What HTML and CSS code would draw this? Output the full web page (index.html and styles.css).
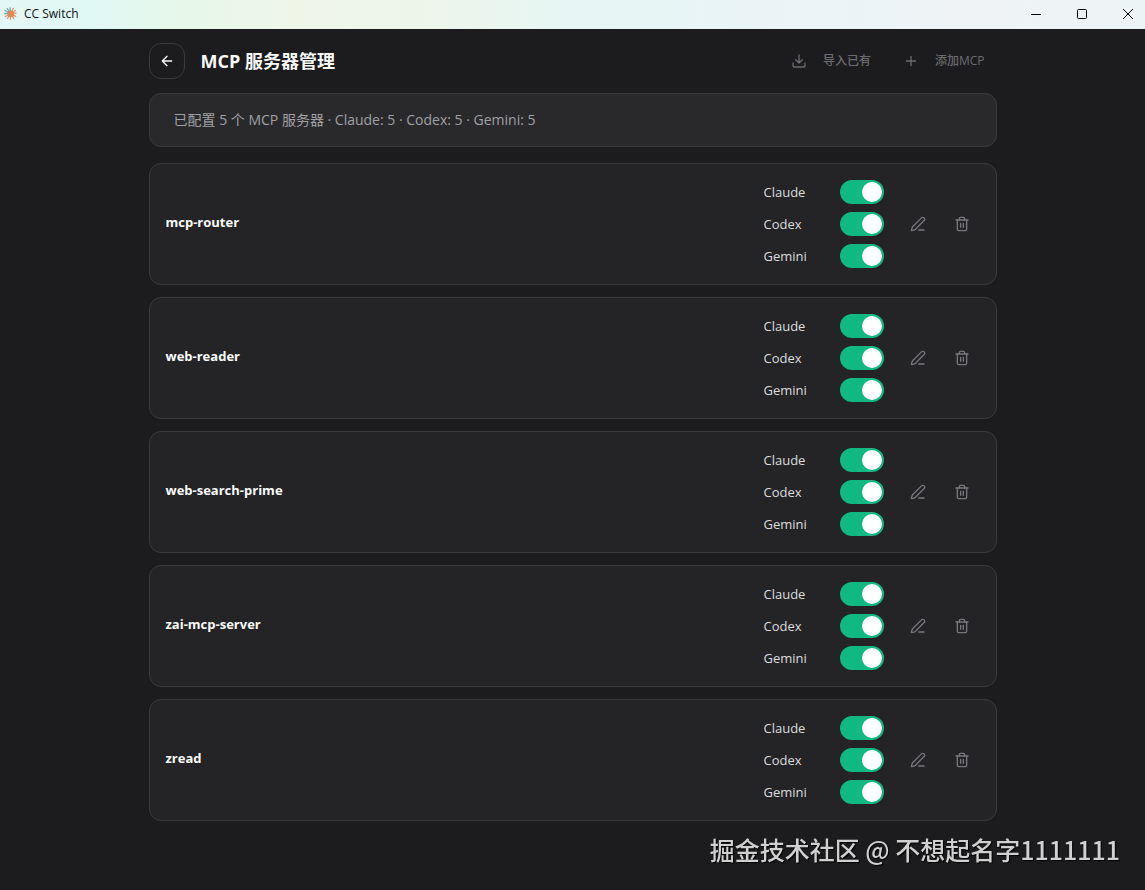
FILE: index.html
```html
<!DOCTYPE html>
<html lang="zh-CN">
<head>
  <meta charset="UTF-8">
  <title>CC Switch</title>
  <link rel="stylesheet" href="styles.css">
</head>
<body>
  <svg class="sprite" aria-hidden="true">
    <symbol id="icon-edit" viewBox="0 0 24 24">
      <path d="M13 21h8"/>
      <path d="M21.174 6.812a1 1 0 0 0-3.986-3.987L3.842 16.174a2 2 0 0 0-.5.83l-1.321 4.352a.5.5 0 0 0 .623.622l4.353-1.32a2 2 0 0 0 .83-.497z"/>
    </symbol>
    <symbol id="icon-trash" viewBox="0 0 24 24">
      <path d="M3 6h18"/>
      <path d="M19 6v14a2 2 0 0 1-2 2H7a2 2 0 0 1-2-2V6"/>
      <path d="M8 6V4a2 2 0 0 1 2-2h4a2 2 0 0 1 2 2v2"/>
      <path d="M10 11v6M14 11v6"/>
    </symbol>
  </svg>

  <div class="titlebar">
    <svg class="app-logo" viewBox="0 0 16 16" aria-hidden="true">
      <g stroke-width="1.4" stroke-linecap="round">
        <path stroke="#72a9b4" d="M8 8 7.500 2M8 8 4.500 2.800M8 8 2.200 4.800M8 8 1.800 8"/>
        <path stroke="#cfa083" d="M8 8 2.500 11.300M8 8 4.800 13.200M8 8 8 14"/>
        <path stroke="#e09a6c" d="M8 8 11 2.500M8 8 13.300 4.800M8 8 14 7.600M8 8 13.600 11M8 8 11.500 13.300"/>
      </g>
      <circle cx="8.500" cy="8.500" r="3.500" fill="#e58a52"/>
    </svg>
    <span class="app-name">CC Switch</span>
    <div class="window-controls">
      <button type="button" aria-label="最小化">
        <svg viewBox="0 0 10 10"><path d="M0 5.500h10"/></svg>
      </button>
      <button type="button" aria-label="最大化">
        <svg viewBox="0 0 10 10"><rect x=".5" y=".5" width="9" height="9" rx="1"/></svg>
      </button>
      <button type="button" aria-label="关闭">
        <svg viewBox="0 0 10 10"><path d="M0 0l10 10M10 0L0 10"/></svg>
      </button>
    </div>
  </div>

  <div class="container">
    <header class="header">
      <button type="button" class="back" aria-label="返回">
        <svg class="icon" viewBox="0 0 24 24"><path d="m12 19-7-7 7-7M19 12H5"/></svg>
      </button>
      <h1>MCP 服务器管理</h1>
      <div class="actions">
        <button type="button" class="action">
          <svg class="icon" viewBox="0 0 24 24"><path d="M12 15V3M21 15v4a2 2 0 0 1-2 2H5a2 2 0 0 1-2-2v-4M7 10l5 5 5-5"/></svg>
          导入已有
        </button>
        <button type="button" class="action">
          <svg class="icon" viewBox="0 0 24 24"><path d="M5 12h14M12 5v14"/></svg>
          添加MCP
        </button>
      </div>
    </header>

    <div class="summary">已配置 5 个 MCP 服务器 · Claude: 5 · Codex: 5 · Gemini: 5</div>

    <main class="server-list">
      <section class="server">
        <h2>mcp-router</h2>
        <div class="apps">
          <label>Claude <input type="checkbox" role="switch" class="switch" checked></label>
          <label>Codex <input type="checkbox" role="switch" class="switch" checked></label>
          <label>Gemini <input type="checkbox" role="switch" class="switch" checked></label>
        </div>
        <div class="tools">
          <button type="button" aria-label="编辑"><svg class="icon"><use href="#icon-edit"/></svg></button>
          <button type="button" aria-label="删除"><svg class="icon"><use href="#icon-trash"/></svg></button>
        </div>
      </section>

      <section class="server">
        <h2>web-reader</h2>
        <div class="apps">
          <label>Claude <input type="checkbox" role="switch" class="switch" checked></label>
          <label>Codex <input type="checkbox" role="switch" class="switch" checked></label>
          <label>Gemini <input type="checkbox" role="switch" class="switch" checked></label>
        </div>
        <div class="tools">
          <button type="button" aria-label="编辑"><svg class="icon"><use href="#icon-edit"/></svg></button>
          <button type="button" aria-label="删除"><svg class="icon"><use href="#icon-trash"/></svg></button>
        </div>
      </section>

      <section class="server">
        <h2>web-search-prime</h2>
        <div class="apps">
          <label>Claude <input type="checkbox" role="switch" class="switch" checked></label>
          <label>Codex <input type="checkbox" role="switch" class="switch" checked></label>
          <label>Gemini <input type="checkbox" role="switch" class="switch" checked></label>
        </div>
        <div class="tools">
          <button type="button" aria-label="编辑"><svg class="icon"><use href="#icon-edit"/></svg></button>
          <button type="button" aria-label="删除"><svg class="icon"><use href="#icon-trash"/></svg></button>
        </div>
      </section>

      <section class="server">
        <h2>zai-mcp-server</h2>
        <div class="apps">
          <label>Claude <input type="checkbox" role="switch" class="switch" checked></label>
          <label>Codex <input type="checkbox" role="switch" class="switch" checked></label>
          <label>Gemini <input type="checkbox" role="switch" class="switch" checked></label>
        </div>
        <div class="tools">
          <button type="button" aria-label="编辑"><svg class="icon"><use href="#icon-edit"/></svg></button>
          <button type="button" aria-label="删除"><svg class="icon"><use href="#icon-trash"/></svg></button>
        </div>
      </section>

      <section class="server">
        <h2>zread</h2>
        <div class="apps">
          <label>Claude <input type="checkbox" role="switch" class="switch" checked></label>
          <label>Codex <input type="checkbox" role="switch" class="switch" checked></label>
          <label>Gemini <input type="checkbox" role="switch" class="switch" checked></label>
        </div>
        <div class="tools">
          <button type="button" aria-label="编辑"><svg class="icon"><use href="#icon-edit"/></svg></button>
          <button type="button" aria-label="删除"><svg class="icon"><use href="#icon-trash"/></svg></button>
        </div>
      </section>
    </main>
  </div>

  <div class="watermark">掘金技术社区 @ 不想起名字1111111</div>
</body>
</html>
```
FILE: styles.css
```css
* {
  box-sizing: border-box;
}
body {
  margin: 0;
  min-height: 100vh;
  background-color: #1c1c1e;
  color: #fafafa;
  font-family: "Segoe UI", "Open Sans", "Noto Sans CJK SC", sans-serif;
  font-size: 14px;
  line-height: 20px;
}
h1, h2 {
  margin: 0;
}
button {
  display: flex;
  align-items: center;
  justify-content: center;
  padding: 0;
  border: none;
  background: none;
  color: inherit;
  font: inherit;
  cursor: pointer;
}
.sprite {
  display: none;
}
.icon {
  width: 16px;
  height: 16px;
  fill: none;
  stroke: currentColor;
  stroke-width: 2;
  stroke-linecap: round;
  stroke-linejoin: round;
}

/* Window title bar */
.titlebar {
  display: flex;
  align-items: center;
  height: 29px;
  padding: 0 0 2px 3px;
  background: linear-gradient(90deg, #e4f7f6 0%, #e0f8f4 8%, #e6f8ea 16%, #eff6e8 26%, #edf5ec 38%, #e6f6f4 51%, #eaf4f7 66%, #eff3f6 85%, #edf4f6 100%);
  color: #111;
}
.app-logo {
  width: 15px;
  height: 15px;
  fill: none;
}
.app-name {
  margin-left: 6px;
  font-size: 12px;
}
.window-controls {
  display: flex;
  gap: 12px;
  margin-left: auto;
}
.window-controls button {
  width: 34px;
  height: 26px;
}
.window-controls svg {
  width: 10px;
  height: 10px;
  overflow: visible;
  fill: none;
  stroke: #000;
}

.container {
  max-width: 896px;
  margin: 0 auto;
  padding: 0 24px;
}

/* Page header */
.header {
  display: flex;
  align-items: center;
  gap: 16px;
  height: 64px;
}
.header h1 {
  font-size: 18px;
  font-weight: 700;
  line-height: 28px;
}
.back {
  width: 36px;
  height: 36px;
  border: 1px solid #3a3a3d;
  border-radius: 12px;
}
.actions {
  display: flex;
  gap: 8px;
  margin-left: auto;
}
.action {
  gap: 16px;
  height: 32px;
  padding: 0 12px;
  color: #6b6b6f;
  font-size: 12px;
  font-weight: 500;
}

.summary {
  padding: 16px 24px;
  border: 1px solid #3a3a3d;
  border-radius: 12px;
  background-color: #29292b;
  color: #a0a0a5;
}

/* Server cards */
.server-list {
  display: flex;
  flex-direction: column;
  gap: 12px;
  padding: 16px 0 24px;
}
.server {
  display: flex;
  align-items: center;
  gap: 16px;
  padding: 16px;
  border: 1px solid #3a3a3d;
  border-radius: 12px;
  background-color: #242427;
}
.server h2 {
  flex: 1;
  margin-bottom: 4px;
  font-size: 13px;
  font-weight: 700;
}
.apps {
  display: flex;
  flex-direction: column;
  gap: 8px;
  width: 120px;
}
.apps label {
  display: flex;
  align-items: center;
  justify-content: space-between;
  color: #dcdcde;
  font-size: 13px;
}
.switch {
  appearance: none;
  width: 44px;
  height: 24px;
  margin: 0;
  padding: 2px;
  border-radius: 12px;
  background-color: #48484a;
  cursor: pointer;
}
.switch::before {
  content: "";
  display: block;
  width: 20px;
  height: 20px;
  border-radius: 50%;
  background-color: #fff;
}
.switch:checked {
  background-color: #10b981;
}
.switch:checked::before {
  margin-left: auto;
}
.tools {
  display: flex;
  gap: 8px;
}
.tools button {
  width: 36px;
  height: 36px;
  color: #77777b;
}

.watermark {
  position: fixed;
  right: 25px;
  bottom: 23px;
  color: #d0d0d0;
  font-family: "Noto Sans CJK SC", sans-serif;
  font-size: 25px;
  font-weight: 500;
  line-height: 36px;
  text-shadow: 1px 1px 1px #000;
}
```
